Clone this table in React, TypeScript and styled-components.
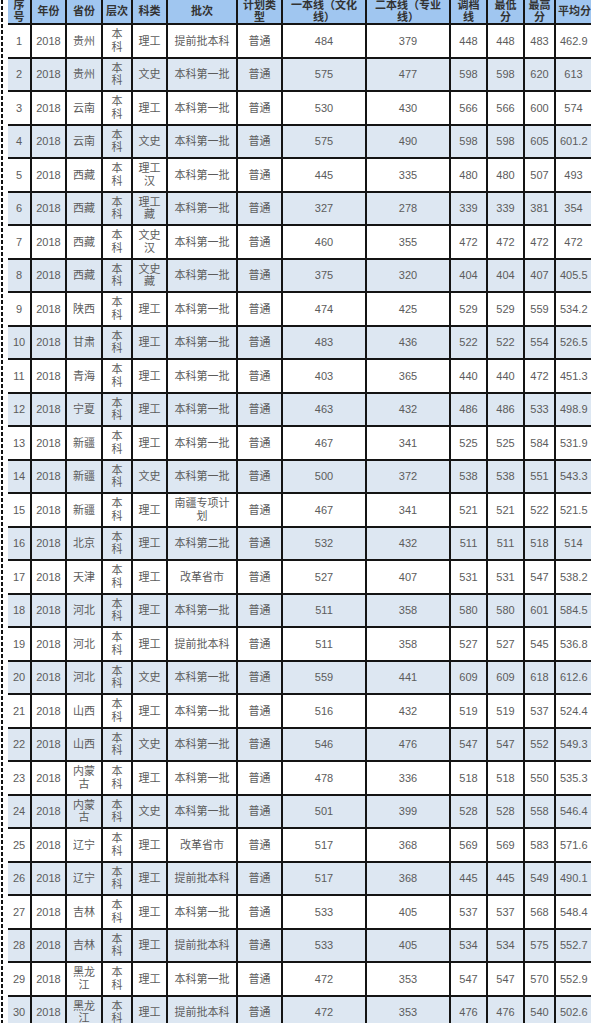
import styled, { createGlobalStyle } from "styled-components";

const GlobalStyle = createGlobalStyle`
  html, body {
    margin: 0;
    padding: 0;
    background: #fff;
    overflow: hidden;
  }
`;

const Page = styled.div`
  padding-left: 8px;
  background-image: repeating-linear-gradient(
    to bottom,
    #111 0,
    #111 4px,
    transparent 4px,
    transparent 6px
  );
  background-size: 2px 100%;
  background-position: 1px 0;
  background-repeat: no-repeat;
  font-family: "Liberation Sans", Arial, "Noto Sans CJK SC", sans-serif;
`;

const Table = styled.table`
  border-collapse: collapse;
  table-layout: fixed;
  width: 583px;
`;

const HeadRow = styled.tr`
  height: 24px;
  background: #a0c6f0;
`;

const Th = styled.th`
  border: 2px solid #141414;
  border-top: none;
  padding: 0 2px;
  font-size: 11px;
  line-height: 11.5px;
  font-weight: bold;
  color: #333;
  text-align: center;
  vertical-align: middle;
  white-space: pre;
  overflow: hidden;

  &:first-child {
    border-left: none;
  }
  &:last-child {
    border-right: none;
  }
`;

const Row = styled.tr<{ $striped: boolean }>`
  height: 33.5px;
  background: ${(p) => (p.$striped ? "#dde7f2" : "#fff")};
`;

const Td = styled.td`
  border: 2px solid #141414;
  padding: 0 4px;
  font-size: 11px;
  line-height: 12.5px;
  color: #5c5c5c;
  text-align: center;
  vertical-align: middle;

  &:first-child {
    border-left: none;
  }
  &:last-child {
    border-right: none;
  }
`;

const columns = [
  { label: "序\n号", width: 23 },
  { label: "年份", width: 35 },
  { label: "省份", width: 36 },
  { label: "层次", width: 30 },
  { label: "科类", width: 35 },
  { label: "批次", width: 70 },
  { label: "计划类\n型", width: 45 },
  { label: "一本线（文化\n线）", width: 84 },
  { label: "二本线（专业\n线）", width: 84 },
  { label: "调档\n线", width: 37 },
  { label: "最低\n分", width: 37 },
  { label: "最高\n分", width: 31 },
  { label: "平均分", width: 36 },
];

// 省份, 科类, 批次, 一本线, 二本线, 调档线, 最低分, 最高分, 平均分
const raw: [string, string, string, number, number, number, number, number, string][] = [
  ["贵州", "理工", "提前批本科", 484, 379, 448, 448, 483, "462.9"],
  ["贵州", "文史", "本科第一批", 575, 477, 598, 598, 620, "613"],
  ["云南", "理工", "本科第一批", 530, 430, 566, 566, 600, "574"],
  ["云南", "文史", "本科第一批", 575, 490, 598, 598, 605, "601.2"],
  ["西藏", "理工汉", "本科第一批", 445, 335, 480, 480, 507, "493"],
  ["西藏", "理工藏", "本科第一批", 327, 278, 339, 339, 381, "354"],
  ["西藏", "文史汉", "本科第一批", 460, 355, 472, 472, 472, "472"],
  ["西藏", "文史藏", "本科第一批", 375, 320, 404, 404, 407, "405.5"],
  ["陕西", "理工", "本科第一批", 474, 425, 529, 529, 559, "534.2"],
  ["甘肃", "理工", "本科第一批", 483, 436, 522, 522, 554, "526.5"],
  ["青海", "理工", "本科第一批", 403, 365, 440, 440, 472, "451.3"],
  ["宁夏", "理工", "本科第一批", 463, 432, 486, 486, 533, "498.9"],
  ["新疆", "理工", "本科第一批", 467, 341, 525, 525, 584, "531.9"],
  ["新疆", "文史", "本科第一批", 500, 372, 538, 538, 551, "543.3"],
  ["新疆", "理工", "南疆专项计划", 467, 341, 521, 521, 522, "521.5"],
  ["北京", "理工", "本科第二批", 532, 432, 511, 511, 518, "514"],
  ["天津", "理工", "改革省市", 527, 407, 531, 531, 547, "538.2"],
  ["河北", "理工", "本科第一批", 511, 358, 580, 580, 601, "584.5"],
  ["河北", "理工", "提前批本科", 511, 358, 527, 527, 545, "536.8"],
  ["河北", "文史", "本科第一批", 559, 441, 609, 609, 618, "612.6"],
  ["山西", "理工", "本科第一批", 516, 432, 519, 519, 537, "524.4"],
  ["山西", "文史", "本科第一批", 546, 476, 547, 547, 552, "549.3"],
  ["内蒙古", "理工", "本科第一批", 478, 336, 518, 518, 550, "535.3"],
  ["内蒙古", "文史", "本科第一批", 501, 399, 528, 528, 558, "546.4"],
  ["辽宁", "理工", "改革省市", 517, 368, 569, 569, 583, "571.6"],
  ["辽宁", "理工", "提前批本科", 517, 368, 445, 445, 549, "490.1"],
  ["吉林", "理工", "本科第一批", 533, 405, 537, 537, 568, "548.4"],
  ["吉林", "理工", "提前批本科", 533, 405, 534, 534, 575, "552.7"],
  ["黑龙江", "理工", "本科第一批", 472, 353, 547, 547, 570, "552.9"],
  ["黑龙江", "理工", "提前批本科", 472, 353, 476, 476, 540, "502.6"],
];

const rows = raw.map((r, i) => [
  String(i + 1),
  "2018",
  r[0],
  "本科",
  r[1],
  r[2],
  "普通",
  String(r[3]),
  String(r[4]),
  String(r[5]),
  String(r[6]),
  String(r[7]),
  r[8],
]);

const App = () => {
  return (
    <>
      <GlobalStyle />
      <Page>
        <Table>
          <colgroup>
            {columns.map((c, i) => (
              <col key={i} style={{ width: c.width }} />
            ))}
          </colgroup>
          <thead>
            <HeadRow>
              {columns.map((c, i) => (
                <Th key={i}>{c.label}</Th>
              ))}
            </HeadRow>
          </thead>
          <tbody>
            {rows.map((row, i) => (
              <Row key={i} $striped={i % 2 === 1}>
                {row.map((cell, j) => (
                  <Td key={j}>{cell}</Td>
                ))}
              </Row>
            ))}
          </tbody>
        </Table>
      </Page>
    </>
  );
};

export default App;
